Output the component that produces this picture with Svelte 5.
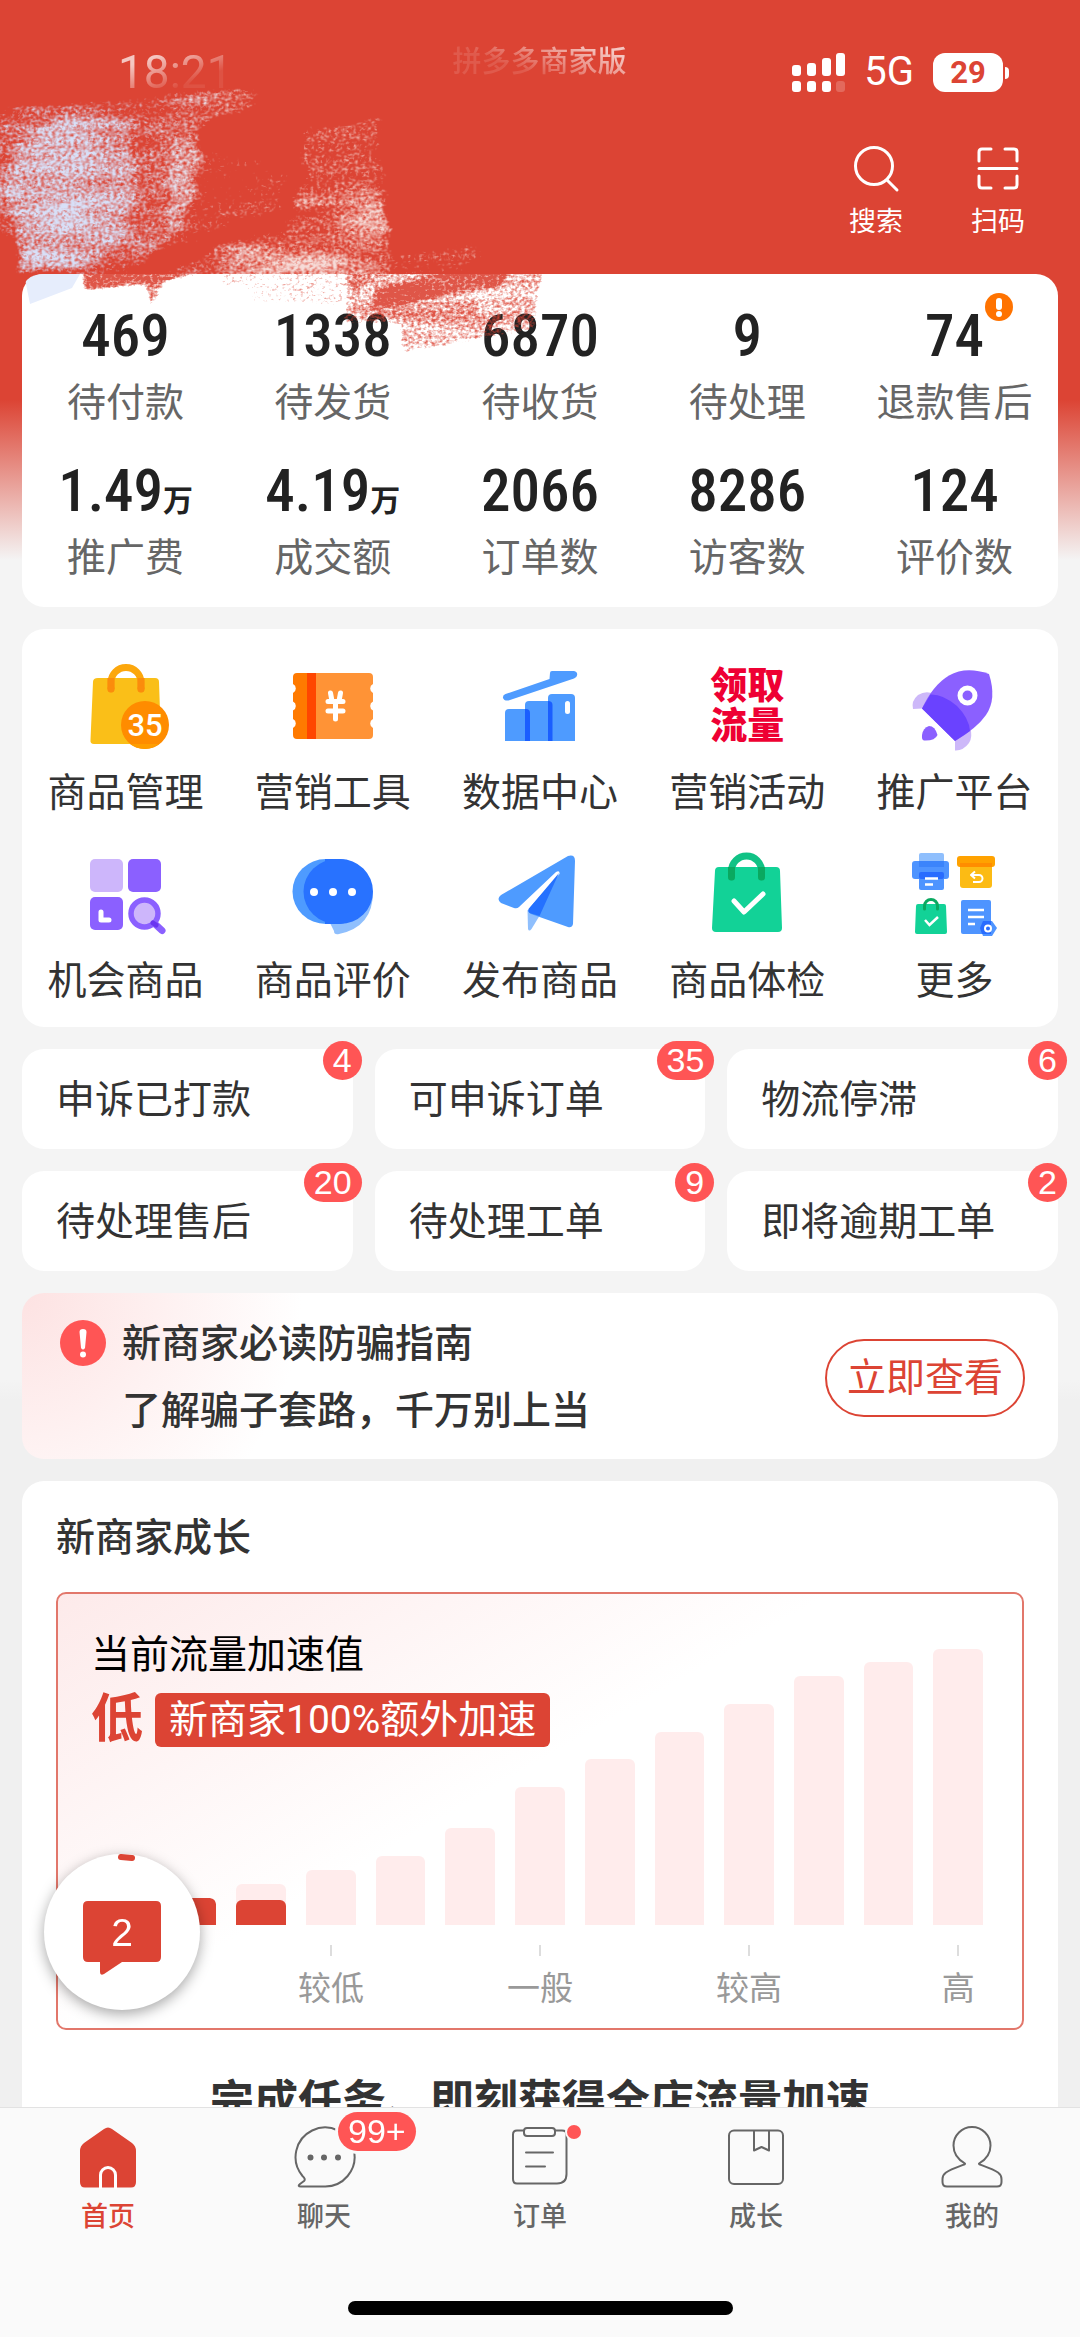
<script>
  const stats = [
    { value: '469', label: '待付款' },
    { value: '1338', label: '待发货' },
    { value: '6870', label: '待收货' },
    { value: '9', label: '待处理' },
    { value: '74', label: '退款售后', alert: true },
    { value: '1.49', unit: '万', label: '推广费' },
    { value: '4.19', unit: '万', label: '成交额' },
    { value: '2066', label: '订单数' },
    { value: '8286', label: '访客数' },
    { value: '124', label: '评价数' }
  ];

  const tools = [
    { icon: 'bag', label: '商品管理' },
    { icon: 'ticket', label: '营销工具' },
    { icon: 'chart', label: '数据中心' },
    { icon: 'promo', label: '营销活动' },
    { icon: 'rocket', label: '推广平台' },
    { icon: 'grid', label: '机会商品' },
    { icon: 'comment', label: '商品评价' },
    { icon: 'plane', label: '发布商品' },
    { icon: 'check', label: '商品体检' },
    { icon: 'more', label: '更多' }
  ];

  const todos = [
    { label: '申诉已打款', count: 4 },
    { label: '可申诉订单', count: 35 },
    { label: '物流停滞', count: 6 },
    { label: '待处理售后', count: 20 },
    { label: '待处理工单', count: 9 },
    { label: '即将逾期工单', count: 2 }
  ];

  // total = bar height, done = filled part
  const bars = [
    { total: 14, done: 14 },
    { total: 27, done: 27 },
    { total: 41, done: 25 },
    { total: 55, done: 0 },
    { total: 69, done: 0 },
    { total: 97, done: 0 },
    { total: 138, done: 0 },
    { total: 166, done: 0 },
    { total: 193, done: 0 },
    { total: 221, done: 0 },
    { total: 249, done: 0 },
    { total: 263, done: 0 },
    { total: 276, done: 0 }
  ];

  const levels = [
    { column: 4, label: '较低' },
    { column: 7, label: '一般' },
    { column: 10, label: '较高' },
    { column: 13, label: '高' }
  ];

  const tabs = [
    { id: 'home', label: '首页' },
    { id: 'chat', label: '聊天', badge: '99+' },
    { id: 'order', label: '订单', dot: true },
    { id: 'growth', label: '成长' },
    { id: 'mine', label: '我的' }
  ];

  let activeTab = $state('home');
</script>

<div class="app">
  <main class="page">
    <header class="header">
      <div class="status">
        <span class="time">18:21</span>
        <span class="app-name">拼多多商家版</span>
        <div class="signals">
          <svg class="signal" viewBox="0 0 54 39" aria-hidden="true">
            <rect x="0" y="12" width="9" height="11" rx="3" />
            <rect x="15" y="10" width="9" height="13" rx="3" />
            <rect x="30" y="5" width="9" height="18" rx="3" />
            <rect x="44" y="0" width="9" height="23" rx="3" />
            <rect x="0" y="28" width="9" height="11" rx="3" />
            <rect x="15" y="28" width="9" height="11" rx="3" />
            <rect x="30" y="28" width="9" height="11" rx="3" />
            <rect x="44" y="28" width="9" height="11" rx="3" opacity="0.2" />
          </svg>
          <span class="network">5G</span>
          <span class="battery">29</span>
        </div>
      </div>
      <div class="actions">
        <button class="action">
          <svg viewBox="0 0 50 50" aria-hidden="true">
            <circle cx="23" cy="23" r="18.5" />
            <path d="M36 37L46 47" />
          </svg>
          搜索
        </button>
        <button class="action">
          <svg viewBox="0 0 50 50" aria-hidden="true">
            <path d="M6 18V9Q6 6 9 6H18M32 6H41Q44 6 44 9V18M44 33V42Q44 45 41 45H32M18 45H9Q6 45 6 42V33M6 25.5H44" />
          </svg>
          扫码
        </button>
      </div>
    </header>

    <section class="card stats">
      {#each stats as stat}
        <a class="stat" href="#stats">
          <span class="value">{stat.value}{#if stat.unit}<small>{stat.unit}</small>{/if}</span>
          <span class="stat-label">{stat.label}</span>
          {#if stat.alert}
            <svg class="alert" viewBox="0 0 28 28" aria-hidden="true">
              <circle cx="14" cy="14" r="14" fill="#ff7300" />
              <rect x="11" y="5" width="6" height="12" rx="3" fill="#fff" />
              <circle cx="14" cy="21" r="3" fill="#fff" />
            </svg>
          {/if}
        </a>
      {/each}
    </section>

    <section class="card tools">
      {#each tools as tool}
        <button class="tool">
          {#if tool.icon === 'promo'}
            <span class="promo">领取<br />流量</span>
          {:else}
            <svg class="tool-icon" viewBox="0 0 90 90" aria-hidden="true">
              {#if tool.icon === 'bag'}
                <path d="M17 17H74Q78 17 78 21L80 79Q80 83 76 83H13Q9 83 9.500 79L12 21Q12 17 17 17Z" fill="#fabf18" />
                <path d="M30 28V21.500a15 15 0 0 1 30 0V28" fill="none" stroke="#fca70c" stroke-width="7" stroke-linecap="round" />
                <path d="M30 17V28M60 17V28" stroke="#fb8c0c" stroke-width="7" />
                <circle cx="30" cy="28" r="3.500" fill="#fb8c0c" />
                <circle cx="60" cy="28" r="3.500" fill="#fb8c0c" />
                <circle cx="64" cy="64" r="24" fill="#ff8c00" />
                <path d="M49 83H78A24 24 0 0 1 49 83Z" fill="#ff9d00" />
                <text x="64" y="75" text-anchor="middle" class="bag-count">35</text>
              {:else if tool.icon === 'ticket'}
                <path d="M9 12H20V78H9Q5 78 5 74V67A5 5 0 0 0 5 58V49.500A5 5 0 0 0 5 40.500V32A5 5 0 0 0 5 23V16Q5 12 9 12Z" fill="#ff7a00" />
                <path d="M81 12H27V78H81Q85 78 85 74V67A5 5 0 0 1 85 58V49.500A5 5 0 0 1 85 40.500V32A5 5 0 0 1 85 23V16Q85 12 81 12Z" fill="#ff9336" />
                <rect x="19" y="12" width="9" height="66" fill="#ff4600" />
                <path d="M42.500 32L44 40M52.500 32L51 40M40 40.500H55M40 50H55M47.500 41V58" stroke="#fff" stroke-width="5" stroke-linecap="round" />
              {:else if tool.icon === 'chart'}
                <path d="M10.500 33L54.500 18L55 12Q55 10 57 10H79Q83 11 82 14.500Q82 16 79 17.500L13.500 39.500Q9 40 8 37Q7.500 34 10.500 33Z" fill="#4e9bff" />
                <path d="M10 80V52Q10 48 14 48H35V80Z" fill="#4e9bff" />
                <path d="M30 80V44Q30 40 34 40H57V80Z" fill="#4e9bff" />
                <path d="M53 80V37Q53 33 57 33H76Q80 33 80 37V80Z" fill="#4e9bff" />
                <path d="M30 80V48H31Q35 48 35 52V80ZM53 80V40Q57.500 40 57.500 44V80Z" fill="#1a5eff" />
                <rect x="70" y="40" width="5" height="13" rx="2.500" fill="#fff" />
              {:else if tool.icon === 'rocket'}
                <path d="M13 47.500L4 48Q2 40 9 34Q17 29 25 33ZM46 80L61 66Q64 76 60 82Q54 90 46 89.500Z" fill="#cdb8f9" />
                <path d="M13 47.500Q24 24 40 14.500Q57 5 80 13Q88 38 77 54Q68 67 46 80Z" fill="#8b60ff" />
                <path d="M13 47.500L21.500 33.500Q34 33 48 45Q60 57 61 70L46 80Z" fill="#6a42ff" />
                <path d="M20 65Q26 65 28.500 74Q26 80 15 79.500Q12.500 79 13 74Q14 67 20 65Z" fill="#8b60ff" />
                <circle cx="58.500" cy="34.500" r="7.500" fill="none" stroke="#fff" stroke-width="5" />
              {:else if tool.icon === 'grid'}
                <rect x="9" y="10" width="33" height="33" rx="5" fill="#cdb6fb" />
                <rect x="47" y="10" width="33" height="33" rx="5" fill="#8b60ff" />
                <rect x="9" y="48" width="33" height="33" rx="5" fill="#8b60ff" />
                <path d="M20 63V71H28" fill="none" stroke="#fff" stroke-width="5" stroke-linecap="round" stroke-linejoin="round" />
                <path d="M74 75L81 81.500" stroke="#8b60ff" stroke-width="7" stroke-linecap="round" />
                <circle cx="63.500" cy="64.500" r="13.500" fill="#cdb6fb" stroke="#8b60ff" stroke-width="5.500" />
                <path d="M72 74L75 76" stroke="#6a35f0" stroke-width="5" stroke-linecap="round" />
              {:else if tool.icon === 'comment'}
                <path d="M42 74L46 82Q46 86 51 85Q85 78 85 43Z" fill="#8fbffd" />
                <ellipse cx="38" cy="42.500" rx="33.500" ry="32.500" fill="#4e9bff" />
                <path d="M37 10H52A33 32.500 0 0 1 52 75H37Z" fill="#2872ff" />
                <ellipse cx="49" cy="42.500" rx="33.500" ry="32.500" fill="#2872ff" />
                <circle cx="26" cy="43" r="4" fill="#fff" />
                <circle cx="45" cy="43" r="4" fill="#fff" />
                <circle cx="64" cy="43" r="4" fill="#fff" />
              {:else if tool.icon === 'plane'}
                <path d="M32.500 61L33 80Q34 83 36.500 80L45 66Z" fill="#8fbffd" />
                <path d="M6 46L73 7Q80 5 80 12L78 75Q77 79 73 78L36 65Q32 63 34 59.500L64.500 25Q65 21 61 23L24 58Q22 60 19 59L6 54Q1 50 6 46Z" fill="#4e9bff" />
                <path d="M64 24L44.500 67L36 64.500Q32 63 34 59.500Z" fill="#2471ff" />
              {:else if tool.icon === 'check'}
                <path d="M17 18H74Q78 18 78 22L80 79Q80 83 76 83H14Q10 83 10 79L13 22Q13 18 17 18Z" fill="#12d297" />
                <path d="M29.500 28V22a15 15 0 0 1 30 0V28" fill="none" stroke="#10c285" stroke-width="7" stroke-linecap="round" />
                <path d="M29.500 18V28M59.500 18V28" stroke="#0aa960" stroke-width="7" />
                <circle cx="29.500" cy="28" r="3.500" fill="#0aa960" />
                <circle cx="59.500" cy="28" r="3.500" fill="#0aa960" />
                <path d="M32 52L42 63L61 45" fill="none" stroke="#fff" stroke-width="5" stroke-linecap="round" stroke-linejoin="round" />
              {:else}
                <rect x="10" y="4" width="25" height="12" rx="2" fill="#8fbffd" />
                <rect x="3" y="12" width="37" height="18" rx="3" fill="#4e94ff" />
                <rect x="10" y="12" width="25" height="6" fill="#3b84fb" />
                <rect x="10" y="23" width="25" height="18" rx="2" fill="#4e94ff" />
                <rect x="10" y="23" width="25" height="7" rx="2" fill="#286cff" />
                <path d="M16 29.500H29M16 35.500H24" stroke="#fff" stroke-width="2.500" />
                <rect x="51" y="10" width="32" height="29" rx="3" fill="#fcbb14" />
                <rect x="48" y="7" width="38" height="11" rx="3" fill="#ffa200" />
                <rect x="51" y="14" width="32" height="4" fill="#ff8d00" />
                <path d="M63 26H70a3 3 0 0 1 0 7H64M66 22.500L62 26L66 29.500" fill="none" stroke="#fff" stroke-width="2" stroke-linejoin="round" />
                <path d="M9 55H35Q37 55 37 57L38 83Q38 85 36 85H8Q6 85 6 83L7 57Q7 55 9 55Z" fill="#12d297" />
                <path d="M15.500 60V57a6.500 6.500 0 0 1 13 0V60" fill="none" stroke="#0aa960" stroke-width="3" stroke-linecap="round" />
                <path d="M16 71L20.500 76L29 68" fill="none" stroke="#fff" stroke-width="2.500" />
                <rect x="52" y="51" width="30" height="34" rx="2" fill="#4e94ff" />
                <path d="M59 61H75M59 68H75M59 75H66" stroke="#fff" stroke-width="2.500" />
                <path d="M74 72H83L88 79L83 87H74L71 79Z" fill="#4e94ff" />
                <path d="M74 72H82V85H73L71 79Z" fill="#286cff" />
                <circle cx="79" cy="79.500" r="3" fill="none" stroke="#fff" stroke-width="2" />
              {/if}
            </svg>
          {/if}
          {tool.label}
        </button>
      {/each}
    </section>

    <section class="todos">
      {#each todos as todo}
        <button class="card todo">
          {todo.label}
          <span class="badge todo-badge">{todo.count}</span>
        </button>
      {/each}
    </section>

    <section class="card notice">
      <svg class="notice-icon" viewBox="0 0 46 46" aria-hidden="true">
        <circle cx="23" cy="23" r="23" fill="#ff5555" />
        <path d="M19.500 12Q19.500 9 23 9T26.500 12L25 28Q23 31 21 28Z" fill="#fff" />
        <circle cx="23" cy="34.500" r="3" fill="#fff" />
      </svg>
      <div class="notice-text">
        <p>新商家必读防骗指南</p>
        <p>了解骗子套路，千万别上当</p>
      </div>
      <button class="notice-btn">立即查看</button>
    </section>

    <section class="card growth">
      <h2>新商家成长</h2>
      <div class="chart">
        <div class="plot">
          <div class="caption">
            <p>当前流量加速值</p>
            <div class="boost">
              <strong>低</strong>
              <span class="tag">新商家100%额外加速</span>
            </div>
          </div>
          <div class="bars">
            {#each bars as bar}
              <div class="bar" style:height="{bar.total}px">
                <div class="fill" style:height="{bar.done}px"></div>
              </div>
            {/each}
          </div>
        </div>
        <div class="levels">
          {#each levels as level}
            <span class="level" style:grid-column={level.column}>{level.label}</span>
          {/each}
        </div>
      </div>
      <h3>完成任务、即刻获得全店流量加速</h3>
    </section>

    <!-- chalk strokes over the shop name -->
    <svg class="chalk" viewBox="0 0 580 380" aria-hidden="true">
      <defs>
        <filter id="chalk-light" x="-60" y="0" width="640" height="380" filterUnits="userSpaceOnUse" color-interpolation-filters="sRGB">
          <feTurbulence type="fractalNoise" baseFrequency="0.28 0.36" numOctaves="2" seed="4" result="fine" />
          <feTurbulence type="fractalNoise" baseFrequency="0.012 0.06" numOctaves="3" seed="9" result="streak" />
          <feComposite in="fine" in2="streak" operator="arithmetic" k2="0.65" k3="0.35" result="noise" />
          <feGaussianBlur in="SourceGraphic" stdDeviation="4" result="soft" />
          <feDisplacementMap in="soft" in2="streak" scale="18" xChannelSelector="R" yChannelSelector="G" result="shape" />
          <feComposite in="shape" in2="noise" operator="arithmetic" k2="2.4" k3="3" k4="-2.8" result="mask" />
          <feColorMatrix in="mask" type="matrix" values="0 0 0 0 0  0 0 0 0 0  0 0 0 0 0  0 0 0 1 0" result="alpha" />
          <feFlood flood-color="#fff" />
          <feComposite in2="alpha" operator="in" />
        </filter>
        <filter id="chalk-red" x="0" y="240" width="580" height="140" filterUnits="userSpaceOnUse" color-interpolation-filters="sRGB">
          <feTurbulence type="fractalNoise" baseFrequency="0.28 0.36" numOctaves="2" seed="7" result="fine" />
          <feTurbulence type="fractalNoise" baseFrequency="0.014 0.08" numOctaves="3" seed="3" result="streak" />
          <feComposite in="fine" in2="streak" operator="arithmetic" k2="0.7" k3="0.3" result="noise" />
          <feGaussianBlur in="SourceGraphic" stdDeviation="2" result="soft" />
          <feComposite in="soft" in2="noise" operator="arithmetic" k2="2.6" k3="2.8" k4="-2.8" result="mask" />
          <feColorMatrix in="mask" type="matrix" values="0 0 0 0 0  0 0 0 0 0  0 0 0 0 0  0 0 0 0.9 0" result="alpha" />
          <feFlood flood-color="#dc4434" />
          <feComposite in2="alpha" operator="in" />
        </filter>
        <linearGradient id="chalk-tint">
          <stop offset="0.2" stop-color="#d8e0f8" />
          <stop offset="0.45" stop-color="#f6dcd8" />
        </linearGradient>
        <clipPath id="above-card">
          <path d="M0 0H580V274H44Q22 274 22 296H0Z" />
        </clipPath>
        <clipPath id="on-card">
          <path d="M580 274H44Q22 274 22 296V380H580Z" />
        </clipPath>
        <mask id="chalk-mask" maskUnits="userSpaceOnUse" x="0" y="0" width="580" height="380">
          <g filter="url(#chalk-light)" transform="rotate(-4)">
            <path d="M-40 114L110 104L252 110L250 122L196 138L184 206L160 245L120 285L-4 280L0 242L-40 234Z" opacity="0.64" />
            <path d="M0 150L56 124L126 126L122 165L114 240L74 268L-6 276L2 228L-8 200Z" opacity="0.5" />
            <path d="M286 146L380 142L372 252L270 248L286 200Z" opacity="0.44" />
            <path d="M286 152L380 146L372 164L288 170ZM286 184L362 178L368 194L288 200ZM276 214L368 206L362 224L276 232Z" opacity="0.4" />
            <path d="M188 262L368 226L376 250L370 310L130 300Z" opacity="0.66" />
            <path d="M196 272L240 266L366 288L360 302L196 290Z" opacity="0.4" />
            <path d="M370 272L464 274L456 306L370 300Z" opacity="0.5" />
            <path d="M160 150L280 190L264 235L150 262Z" opacity="0.46" />
          </g>
        </mask>
      </defs>
      <g clip-path="url(#above-card)">
        <rect width="580" height="380" fill="url(#chalk-tint)" mask="url(#chalk-mask)" />
      </g>
      <g clip-path="url(#on-card)">
        <path d="M24 274H80L72 288L30 304Z" fill="#e6edfc" />
        <g filter="url(#chalk-red)">
          <path d="M80 266H228L160 284L84 291Z" opacity="0.95" />
          <path d="M144 282H164L156 304H148Z" opacity="0.72" />
          <path d="M228 266H380L345 306L250 302L248 290L215 288Z" opacity="0.5" />
          <path d="M345 266H546L540 290L536 330L402 354L398 324L338 324L350 300Z" opacity="0.66" />
          <path d="M375 290L470 266H512L500 286L372 308Z" opacity="0.9" />
          <path d="M380 302L478 300V316L350 318Z" opacity="0.4" />
        </g>
      </g>
    </svg>
  </main>

  <button class="fab" aria-label="2 条消息">
    <svg viewBox="0 0 156 156" aria-hidden="true">
      <path d="M77 3L88 4" fill="none" stroke="#dc4434" stroke-width="6" stroke-linecap="round" />
      <path d="M44 47H112Q117 47 117 52V103Q117 108 112 108H78L60 120Q56 122 56 118V108H44Q39 108 39 103V52Q39 47 44 47Z" fill="#dc4434" />
      <text x="78" y="92" text-anchor="middle" class="fab-count">2</text>
    </svg>
  </button>

  <nav class="tabbar">
    <div class="tabs">
      {#each tabs as tab}
        <button class="tab" class:active={activeTab === tab.id} onclick={() => (activeTab = tab.id)}>
          <span class="tab-icon">
            <svg viewBox="0 0 64 64" aria-hidden="true">
              {#if tab.id === 'home'}
                <path d="M28 4Q32 1 36 4L56 18Q60 21 60 26V57Q60 62.500 55 62.500H9Q4 62.500 4 57V26Q4 21 8 18Z" fill="currentColor" stroke="none" />
                <path d="M24.500 63V50a7.500 7.500 0 0 1 15 0V63" stroke="#fff" stroke-width="3" />
              {:else if tab.id === 'chat'}
                <path d="M32 61.500A29.500 29.500 0 1 0 10.500 51Q14 54 12 56L8 59Q5 61.500 9 61.500Z" />
                <path d="M18.500 32.500h0M32 32.500h0M46 32.500h0" stroke-width="6" />
              {:else if tab.id === 'order'}
                <path d="M16 5.500H9Q5 5.500 5 9.500V54Q5 58.500 9 58.500H49Q58.500 58.500 58.500 49V9.500Q58.500 5.500 54 5.500H47" />
                <rect x="16" y="3" width="31" height="8" rx="3" />
                <path d="M18 27.500H45M18 41.500H37" />
              {:else if tab.id === 'growth'}
                <rect x="5" y="5.500" width="54" height="53.500" rx="5" />
                <path d="M30 6V25.500L37.500 22L45 25.500V6" />
              {:else}
                <path d="M25 38.500C17 34 13.500 28 13.500 20.500A18.500 18.500 0 0 1 50.500 20.500C50.500 28 47 34 39 38.500C38 40 50 42 58 47.500Q61.500 50 61.500 54V57Q61.500 61.500 57 61.500H7Q2.500 61.500 2.500 57V54Q2.500 50 6 47.500C14 42 26 40 25 38.500Z" />
              {/if}
            </svg>
            {#if tab.badge}<span class="badge tab-badge">{tab.badge}</span>{/if}
            {#if tab.dot}<span class="dot"></span>{/if}
          </span>
          {tab.label}
        </button>
      {/each}
    </div>
    <div class="home-indicator"></div>
  </nav>
</div>

<style>
  :global(body) {
    margin: 0;
  }

  .app {
    --red: #dc4434;
    position: relative;
    display: flex;
    flex-direction: column;
    height: 100vh;
    box-sizing: border-box;
    background: linear-gradient(var(--red) 400px, #f4f4f4 560px, #f4f4f4 1380px, #f0f0f0 1400px);
    color: #333;
    font-family: Roboto, "Noto Sans CJK SC", sans-serif;
    font-size: 39px;
    line-height: 54px;
  }

  button {
    margin: 0;
    padding: 0;
    border: none;
    background: none;
    color: inherit;
    font: inherit;
    cursor: pointer;
  }

  a {
    color: inherit;
    text-decoration: none;
  }

  h2,
  h3,
  p {
    margin: 0;
  }

  svg {
    display: block;
  }

  .page {
    position: relative;
    flex: 1;
    min-height: 0;
    display: flex;
    flex-direction: column;
    gap: 22px;
    padding: 0 22px;
    overflow-y: auto;
    scrollbar-width: none;
  }

  .page > * {
    flex-shrink: 0;
  }

  .card {
    background: #fff;
    border-radius: 22px;
  }

  .badge {
    display: flex;
    align-items: center;
    justify-content: center;
    box-sizing: border-box;
    min-width: 39px;
    height: 39px;
    padding: 0 10px;
    border-radius: 20px;
    background: #ff5555;
    color: #fff;
    font-family: "Liberation Sans", sans-serif;
    font-size: 34px;
    line-height: 39px;
  }

  /* header */
  .header {
    color: #fff;
    padding: 46px 33px 12px 96px;
  }

  .status {
    display: grid;
    grid-template-columns: 1fr auto 1fr;
    align-items: center;
    height: 52px;
    padding-right: 22px;
    line-height: 52px;
  }

  .time {
    width: 120px;
    font-size: 46px;
    font-weight: 400;
    -webkit-mask-image: linear-gradient(160deg, rgb(0 0 0 / 0.7) 25%, rgb(0 0 0 / 0.08) 65%);
    mask-image: linear-gradient(160deg, rgb(0 0 0 / 0.7) 25%, rgb(0 0 0 / 0.08) 65%);
  }

  .app-name {
    align-self: start;
    padding-right: 42px;
    font-size: 29px;
    line-height: 32px;
    font-weight: 500;
    -webkit-mask-image: linear-gradient(200deg, rgb(0 0 0 / 0.7) 25%, rgb(0 0 0 / 0.12) 70%);
    mask-image: linear-gradient(200deg, rgb(0 0 0 / 0.7) 25%, rgb(0 0 0 / 0.12) 70%);
  }

  .signals {
    display: flex;
    align-items: center;
    justify-content: flex-end;
  }

  .signal {
    width: 54px;
    height: 39px;
    fill: #fff;
  }

  .network {
    margin: 0 19px 0 18px;
    font-size: 40px;
  }

  .battery {
    position: relative;
    width: 70px;
    height: 39px;
    border-radius: 12px;
    background: #fff;
    color: var(--red);
    font-size: 31px;
    font-weight: 700;
    line-height: 39px;
    text-align: center;
  }

  .battery::after {
    content: "";
    position: absolute;
    top: 14px;
    right: -6px;
    width: 4px;
    height: 12px;
    border-radius: 0 6px 6px 0;
    background: #fff;
  }

  .actions {
    display: flex;
    justify-content: flex-end;
    gap: 68px;
    margin-top: 45px;
  }

  .action {
    display: flex;
    flex-direction: column;
    align-items: center;
    gap: 11px;
    font-size: 27px;
    line-height: 36px;
  }

  .action svg {
    width: 50px;
    height: 50px;
    fill: none;
    stroke: #fff;
    stroke-width: 3;
    stroke-linecap: round;
  }

  /* stats */
  .stats {
    display: grid;
    grid-template-columns: repeat(5, 1fr);
    row-gap: 32px;
    padding: 32px 0 23px;
  }

  .stat {
    position: relative;
    display: flex;
    flex-direction: column;
    align-items: center;
    gap: 10px;
    height: 123px;
  }

  .value {
    height: 60px;
    color: #222;
    font-family: "Roboto Condensed", "Liberation Sans Narrow", Roboto, "Noto Sans CJK SC", sans-serif;
    font-size: 59px;
    font-weight: 500;
    line-height: 60px;
  }

  .value small {
    font-size: 30px;
    font-weight: 700;
    line-height: 30px;
  }

  .stat-label {
    color: #666;
    white-space: nowrap;
  }

  .alert {
    position: absolute;
    top: -13px;
    left: calc(50% + 31px);
    width: 28px;
    height: 28px;
  }

  /* tools */
  .tools {
    display: grid;
    grid-template-columns: repeat(5, 1fr);
    row-gap: 29px;
    padding: 32px 0 19px;
  }

  .tool {
    display: flex;
    flex-direction: column;
    align-items: center;
    gap: 15px;
    white-space: nowrap;
  }

  .tool-icon {
    width: 90px;
    height: 90px;
  }

  .bag-count {
    fill: #fff;
    font-size: 31px;
    font-weight: 500;
  }

  .promo {
    box-sizing: border-box;
    height: 90px;
    padding-top: 6px;
    color: #ee0033;
    font-size: 37px;
    font-weight: 900;
    line-height: 40px;
  }

  /* todos */
  .todos {
    display: grid;
    grid-template-columns: repeat(3, 1fr);
    gap: 22px;
  }

  .todo {
    position: relative;
    padding: 24px 34px 22px;
    background: #fff;
    text-align: left;
  }

  .todo-badge {
    position: absolute;
    top: -8px;
    right: -9px;
  }

  /* notice */
  .notice {
    display: flex;
    align-items: center;
    padding: 18px 33px 14px 38px;
    background: radial-gradient(circle at 0 0, #fde2e2, #fff 280px);
  }

  .notice-icon {
    align-self: flex-start;
    width: 46px;
    height: 46px;
    margin: 9px 16px 0 0;
  }

  .notice-text {
    flex: 1;
    font-weight: 500;
    line-height: 67px;
  }

  .notice-btn {
    width: 200px;
    height: 78px;
    border: 2px solid var(--red);
    border-radius: 39px;
    color: var(--red);
  }

  /* growth */
  .growth {
    padding: 30px 34px;
    border-radius: 22px 22px 0 0;
  }

  h2 {
    font-size: 39px;
    font-weight: 500;
    line-height: 54px;
  }

  .chart {
    margin-top: 27px;
    padding: 34px 33px 20px;
    border: 2px solid #e2776b;
    border-radius: 10px;
    background: linear-gradient(150deg, #fdeaea, #fff 45%);
  }

  .plot {
    display: grid;
  }

  .caption {
    grid-area: 1 / 1;
    color: #000;
  }

  .boost {
    display: flex;
    align-items: center;
    gap: 12px;
    margin-top: 11px;
  }

  .boost strong {
    color: var(--red);
    font-size: 52px;
    font-weight: 700;
  }

  .tag {
    padding: 0 14px;
    border-radius: 6px;
    background: var(--red);
    color: #fff;
  }

  .bars {
    grid-area: 1 / 1;
    display: flex;
    align-items: flex-end;
    gap: 20px;
    height: 297px;
    padding: 0 6px;
  }

  .bar {
    flex: 1;
    display: flex;
    align-items: flex-end;
    border-radius: 6px 6px 0 0;
    background: #ffecec;
    overflow: hidden;
  }

  .fill {
    width: 100%;
    border-radius: 6px 6px 0 0;
    background: var(--red);
  }

  .levels {
    display: grid;
    grid-template-columns: repeat(13, 1fr);
    column-gap: 20px;
    margin-top: 20px;
    padding: 0 6px;
  }

  .level {
    display: flex;
    flex-direction: column;
    align-items: center;
    gap: 14px;
    width: 0;
    justify-self: center;
    color: #999;
    font-size: 33px;
    line-height: 38px;
    white-space: nowrap;
  }

  .level::before {
    content: "";
    width: 2px;
    height: 11px;
    background: #ddd;
  }

  h3 {
    margin-top: 41px;
    font-size: 44px;
    font-weight: 700;
    line-height: 62px;
    text-align: center;
    white-space: nowrap;
  }

  .chalk {
    position: absolute;
    top: 0;
    left: 0;
    width: 580px;
    height: 380px;
    pointer-events: none;
  }

  /* floating message button */
  .fab {
    position: absolute;
    left: 44px;
    bottom: 327px;
    width: 156px;
    height: 156px;
    border-radius: 50%;
    background: #fff;
    box-shadow: 0 4px 14px rgb(0 0 0 / 0.35);
  }

  .fab-count {
    fill: #fff;
    font-family: "Liberation Sans", sans-serif;
    font-size: 39px;
  }

  /* tab bar */
  .tabbar {
    display: flex;
    flex-direction: column;
    align-items: center;
    gap: 66px;
    padding: 17px 0 22px;
    border-top: 1px solid #e2e2e2;
    background: #fafafa;
  }

  .tabs {
    display: grid;
    grid-template-columns: repeat(5, 1fr);
    width: 100%;
  }

  .tab {
    display: flex;
    flex-direction: column;
    align-items: center;
    gap: 10px;
    color: #666;
    font-size: 27px;
    font-weight: 500;
    line-height: 36px;
  }

  .tab.active {
    color: var(--red);
  }

  .tab-icon {
    position: relative;
    width: 64px;
    height: 64px;
  }

  .tab-icon svg {
    width: 64px;
    height: 64px;
    fill: none;
    stroke: currentColor;
    stroke-width: 2;
    stroke-linecap: round;
    stroke-linejoin: round;
  }

  .tab-badge {
    position: absolute;
    top: -13px;
    left: 46px;
    box-shadow: 0 0 0 3px #fafafa;
  }

  .dot {
    position: absolute;
    top: 0;
    left: 59px;
    width: 14px;
    height: 14px;
    border-radius: 50%;
    background: #ff5555;
    box-shadow: 0 0 0 2px #fafafa;
  }

  .home-indicator {
    width: 385px;
    height: 14px;
    border-radius: 7px;
    background: #000;
  }
</style>
